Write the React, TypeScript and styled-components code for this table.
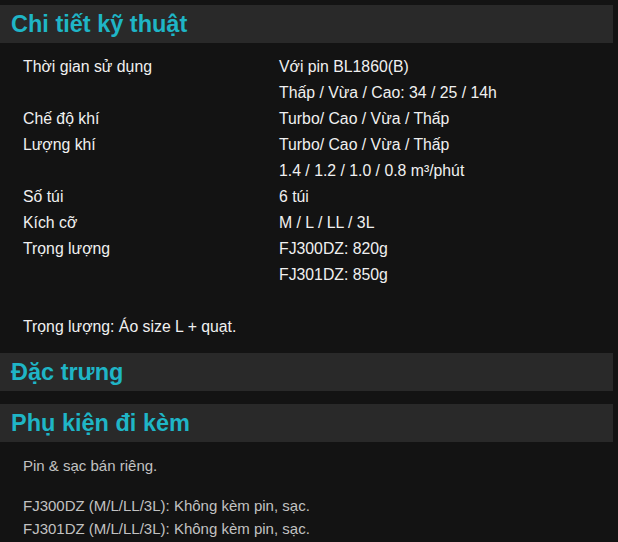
import React from 'react';
import styled, { createGlobalStyle } from 'styled-components';

const GlobalStyle = createGlobalStyle`
  html, body {
    margin: 0;
    padding: 0;
    background: #131313;
  }
  body {
    font-family: "Liberation Sans", Arial, sans-serif;
  }
`;

const Page = styled.div`
  width: 618px;
  min-height: 542px;
  background: #131313;
  padding-top: 5px;
  box-sizing: border-box;
`;

const SectionHeader = styled.h2`
  margin: 0 5px 0 0;
  height: 38px;
  display: flex;
  align-items: center;
  padding-left: 11px;
  background: #292929;
  color: #1fb5c6;
  font-size: 23.5px;
  font-weight: bold;
`;

const Section = styled.section<{ $gap?: number }>`
  margin-bottom: ${(p) => p.$gap ?? 13}px;
`;

const SpecTable = styled.div`
  display: grid;
  grid-template-columns: 256px 1fr;
  padding: 11px 0 0 23px;
  color: #f0f0f0;
  font-size: 15.8px;
  line-height: 26px;
`;

const Cell = styled.div``;

const Note = styled.p`
  margin: 26px 0 0 23px;
  color: #f0f0f0;
  font-size: 15.8px;
  line-height: 26px;
`;

const Body = styled.div`
  padding: 12px 0 0 23px;
  color: #c2c2c2;
  font-size: 15px;
  line-height: 23px;
`;

const Para = styled.p`
  margin: 0 0 17px;
`;

const specs: [string, string][] = [
  ['Thời gian sử dụng', 'Với pin BL1860(B)'],
  ['', 'Thấp / Vừa / Cao: 34 / 25 / 14h'],
  ['Chế độ khí', 'Turbo/ Cao / Vừa / Thấp'],
  ['Lượng khí', 'Turbo/ Cao / Vừa / Thấp'],
  ['', '1.4 / 1.2 / 1.0 / 0.8 m³/phút'],
  ['Số túi', '6 túi'],
  ['Kích cỡ', 'M / L / LL / 3L'],
  ['Trọng lượng', 'FJ300DZ: 820g'],
  ['', 'FJ301DZ: 850g'],
];

export default function App() {
  return (
    <Page>
      <GlobalStyle />
      <Section>
        <SectionHeader>Chi tiết kỹ thuật</SectionHeader>
        <SpecTable>
          {specs.map(([label, value], i) => (
            <React.Fragment key={i}>
              <Cell>{label}</Cell>
              <Cell>{value}</Cell>
            </React.Fragment>
          ))}
        </SpecTable>
        <Note>Trọng lượng: Áo size L + quạt.</Note>
      </Section>
      <Section>
        <SectionHeader>Đặc trưng</SectionHeader>
      </Section>
      <Section $gap={0}>
        <SectionHeader>Phụ kiện đi kèm</SectionHeader>
        <Body>
          <Para>Pin &amp; sạc bán riêng.</Para>
          <Para>
            FJ300DZ (M/L/LL/3L): Không kèm pin, sạc.
            <br />
            FJ301DZ (M/L/LL/3L): Không kèm pin, sạc.
          </Para>
        </Body>
      </Section>
    </Page>
  );
}
